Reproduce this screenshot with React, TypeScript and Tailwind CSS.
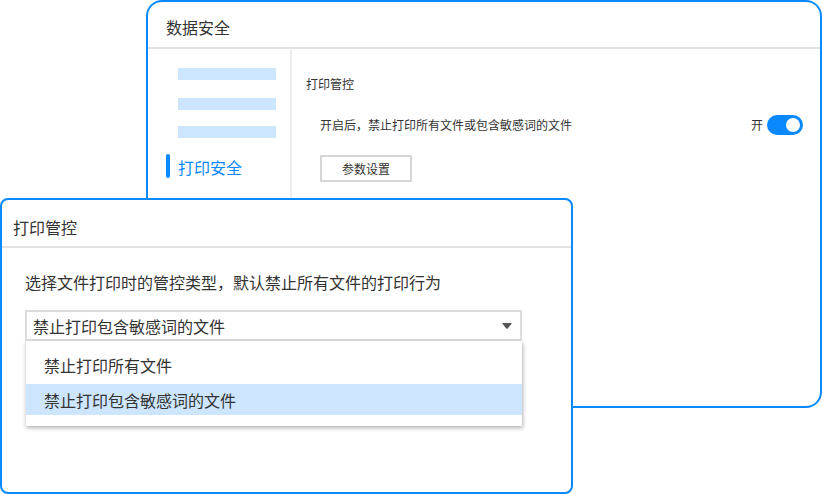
export default function App() {
  return (
    <div
      className="relative w-[822px] h-[494px] bg-white overflow-hidden text-[#333]"
      style={{ fontFamily: '"Noto Sans CJK SC", "Noto Sans", sans-serif' }}
    >
      {/* back window */}
      <div className="absolute left-[146px] top-0 w-[676px] h-[408px] border-2 border-[#0a89ff] rounded-[16px] bg-white flex flex-col overflow-hidden">
        <div className="h-[47px] shrink-0 flex items-center pt-[5px] pl-[18px] text-[16px] text-[#333] border-b-2 border-[#e2e2e2]">
          数据安全
        </div>
        <div className="flex flex-1">
          <div className="w-[144px] shrink-0 border-r-2 border-[#eeeeee] pt-[19px]">
            <div className="ml-[30px] w-[98px] h-[12px] bg-[#cce6ff]" />
            <div className="ml-[30px] mt-[18px] w-[98px] h-[12px] bg-[#cce6ff]" />
            <div className="ml-[30px] mt-[16px] w-[98px] h-[12px] bg-[#cce6ff]" />
            <div className="mt-[16px] flex items-center h-[24px] pl-[18px]">
              <div className="w-[4px] h-[24px] rounded-full bg-[#0a89ff]" />
              <span className="ml-[8px] pt-[2px] text-[16px] leading-none text-[#0a89ff]">打印安全</span>
            </div>
          </div>
          <div className="flex-1 pl-[14px] pr-[17px] pt-[26px]">
            <div className="text-[12px] leading-[18px]">打印管控</div>
            <div className="mt-[22px] pl-[14px] flex items-center justify-between h-[20px]">
              <span className="text-[12px]">开启后，禁止打印所有文件或包含敏感词的文件</span>
              <div className="flex items-center gap-[4px]">
                <span className="text-[12px]">开</span>
                <div className="w-[36px] h-[20px] rounded-full bg-[#0a89ff] flex items-center justify-end pr-[3px]">
                  <div className="w-[14px] h-[14px] rounded-full bg-white" />
                </div>
              </div>
            </div>
            <div className="mt-[20px] ml-[14px] w-[92px] h-[27px] border-2 border-[#d6d6d6] flex items-center justify-center text-[12px]">
              参数设置
            </div>
          </div>
        </div>
      </div>

      {/* front window */}
      <div className="absolute left-0 top-[198px] w-[573px] h-[296px] border-2 border-[#0a89ff] rounded-[8px] bg-white flex flex-col">
        <div className="h-[48px] shrink-0 flex items-center pt-[7px] pl-[11px] text-[16px] border-b-2 border-[#e2e2e2]">
          打印管控
        </div>
        <div className="pl-[23px] pt-[22px]">
          <div className="text-[16px] leading-[24px] text-[#333]">选择文件打印时的管控类型，默认禁止所有文件的打印行为</div>
          <div className="mt-[16px] w-[497px]">
            <div className="h-[31px] border-2 border-[#dcdcdc] flex items-center justify-between pl-[6px] pr-[8px] text-[16px]">
              <span>禁止打印包含敏感词的文件</span>
              <svg width="10" height="6" viewBox="0 0 10 6">
                <path d="M1 0 H9 Q10 0 9.4 1 L5.7 5.4 Q5 6.2 4.3 5.4 L0.6 1 Q0 0 1 0 Z" fill="#555" />
              </svg>
            </div>
            <div className="bg-white pt-[10px] pb-[11px] shadow-[1px_2px_4px_rgba(0,0,0,0.3)] border-l border-[#e6e6e6] text-[16px]">
              <div className="h-[33px] flex items-center pl-[18px] pb-[5px]">禁止打印所有文件</div>
              <div className="h-[31px] flex items-center pl-[18px] bg-[#cde6fe]">禁止打印包含敏感词的文件</div>
            </div>
          </div>
        </div>
      </div>
    </div>
  )
}
